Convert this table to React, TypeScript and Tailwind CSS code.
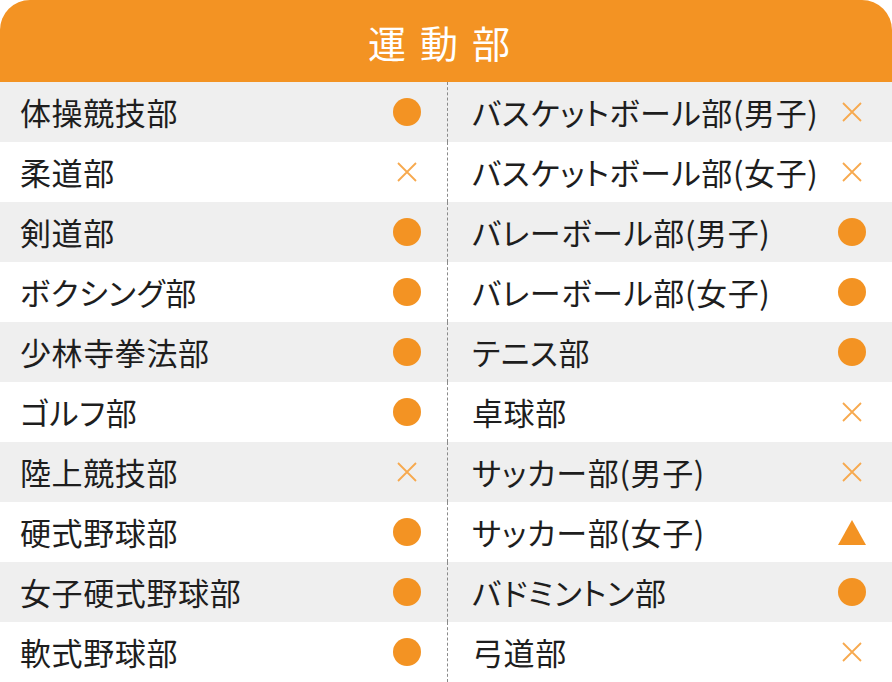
type Mark = "o" | "x" | "t";

const rows: [string, Mark, string, Mark][] = [
  ["体操競技部", "o", "バスケットボール部(男子)", "x"],
  ["柔道部", "x", "バスケットボール部(女子)", "x"],
  ["剣道部", "o", "バレーボール部(男子)", "o"],
  ["ボクシング部", "o", "バレーボール部(女子)", "o"],
  ["少林寺拳法部", "o", "テニス部", "o"],
  ["ゴルフ部", "o", "卓球部", "x"],
  ["陸上競技部", "x", "サッカー部(男子)", "x"],
  ["硬式野球部", "o", "サッカー部(女子)", "t"],
  ["女子硬式野球部", "o", "バドミントン部", "o"],
  ["軟式野球部", "o", "弓道部", "x"],
];

function Icon({ mark }: { mark: Mark }) {
  if (mark === "o") {
    return <span className="block h-[28px] w-[28px] rounded-full bg-[#f39323]" />;
  }
  if (mark === "t") {
    return (
      <svg width="30" height="27" viewBox="0 0 30 27">
        <polygon points="15,1 29,26 1,26" fill="#f39323" />
      </svg>
    );
  }
  return (
    <svg width="22" height="22" viewBox="0 0 22 22">
      <path d="M2 2 L20 20 M20 2 L2 20" stroke="#f7a94e" strokeWidth="1.8" />
    </svg>
  );
}

// long vowel mark keeps its full width, the other kana are set proportionally
function Label({ text }: { text: string }) {
  return (
    <span className="whitespace-nowrap text-[31px] tracking-[0.02em] text-[#1e1e1e] [font-feature-settings:'palt']">
      {text.split(/(ー)/).map((part, i) =>
        part === "ー" ? (
          <span key={i} className="[font-feature-settings:normal]">
            ー
          </span>
        ) : (
          part
        )
      )}
    </span>
  );
}

function Cell({ label, mark, right }: { label: string; mark: Mark; right?: boolean }) {
  return (
    <div
      className={
        right
          ? "flex items-center justify-between border-l border-dashed border-[#8a8a8a] pl-6"
          : "flex items-center justify-between pl-5"
      }
    >
      <Label text={label} />
      <span className="mr-5 flex w-10 justify-center">
        <Icon mark={mark} />
      </span>
    </div>
  );
}

export default function App() {
  return (
    <div
      className="w-[892px] h-[682px] overflow-hidden bg-white"
      style={{ fontFamily: '"Noto Sans CJK JP", "Noto Sans", sans-serif' }}
    >
      <div className="flex h-[82px] items-center justify-center rounded-t-[30px] bg-[#f39323]">
        <h1 className="text-[38px] font-normal tracking-[14px] text-white">運動部</h1>
      </div>
      {rows.map(([l, lm, r, rm], i) => (
        <div
          key={l}
          className={`grid h-[60px] grid-cols-[447px_1fr] ${i % 2 === 0 ? "bg-[#efefef]" : "bg-white"}`}
        >
          <Cell label={l} mark={lm} />
          <Cell label={r} mark={rm} right />
        </div>
      ))}
    </div>
  );
}
